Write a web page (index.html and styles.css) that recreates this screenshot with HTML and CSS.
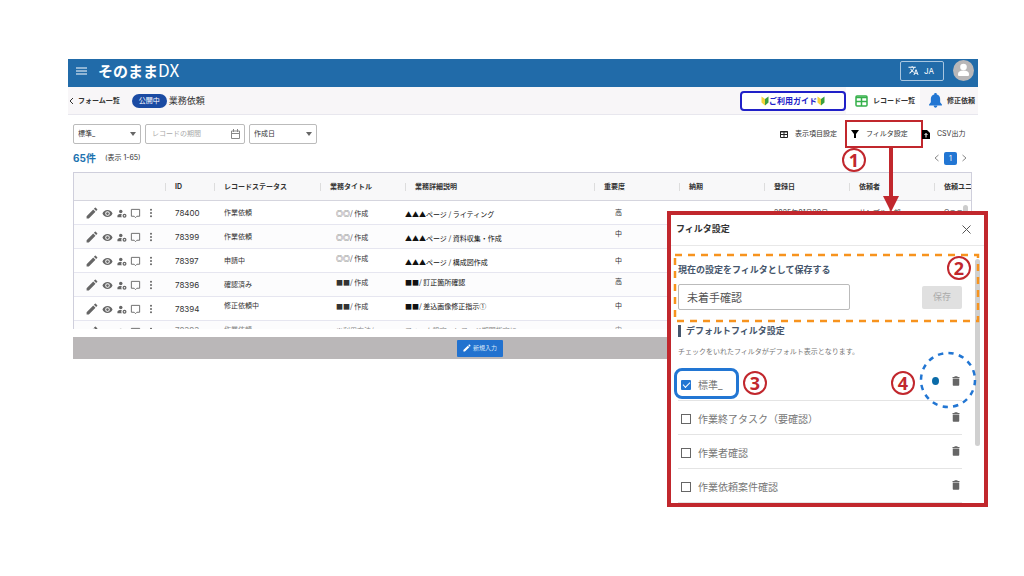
FILE: index.html
```html
<!DOCTYPE html>
<html lang="ja">
<head>
<meta charset="utf-8">
<title>そのままDX</title>
<link rel="stylesheet" href="styles.css">
</head>
<body>
<svg class="defs" aria-hidden="true">
  <symbol id="edit" viewBox="2 2 20 20"><path d="M3 17.250V21h3.750L17.810 9.940l-3.750-3.750L3 17.250zM20.710 7.040a1 1 0 000-1.410l-2.340-2.340a1 1 0 00-1.410 0l-1.830 1.830 3.750 3.750 1.830-1.830z"/></symbol>
  <symbol id="eye" viewBox="0 0 24 24"><path fill-rule="evenodd" d="M12 4.500C7 4.500 2.730 7.610 1 12c1.730 4.390 6 7.500 11 7.500s9.270-3.110 11-7.500c-1.730-4.390-6-7.500-11-7.500zM12 17a5 5 0 110-10 5 5 0 010 10zm0-8a3 3 0 100 6 3 3 0 000-6z"/></symbol>
  <symbol id="user-gear" viewBox="0 0 24 24"><circle cx="9" cy="7" r="4.200"/><path d="M1 21v-3c0-3 4-4.600 8-4.600 1.500 0 2 .1 2.500.3-1.500 2-1.500 5 0 7.300z"/><path fill-rule="evenodd" d="M18 12.500a4.800 4.800 0 110 9.600 4.800 4.800 0 010-9.600zm0 3a1.800 1.800 0 100 3.600 1.800 1.800 0 000-3.600z"/></symbol>
  <symbol id="comment" viewBox="0 0 24 24"><path d="M3 3h18v15h-6l-3 3-3-3H3z" fill="none" stroke="currentColor" stroke-width="2"/></symbol>
  <symbol id="more" viewBox="0 0 24 24"><circle cx="12" cy="4" r="2.400"/><circle cx="12" cy="12" r="2.400"/><circle cx="12" cy="20" r="2.400"/></symbol>
  <symbol id="trash" viewBox="4 2 16 20"><path d="M5.500 7h13v12.500c0 1.200-.8 2-2 2h-9c-1.200 0-2-.8-2-2zM5 4h3.500l1-1.500h5l1 1.500H19v2H5z"/></symbol>
  <symbol id="leaf" viewBox="0 0 16 20"><path d="M1 1l7 5v13l-7-6z" fill="#f2d43a"/><path d="M15 1L8 6v13l7-6z" fill="#3a9e3f"/></symbol>
  <symbol id="tools" viewBox="0 0 70 12">
    <use href="#edit" x="0" y="0" width="12" height="12"/>
    <use href="#eye" x="16" y="1" width="11" height="11"/>
    <use href="#user-gear" x="31" y="1" width="10" height="11"/>
    <use href="#comment" x="44" y="1" width="11" height="11"/>
    <use href="#more" x="60" y="1" width="10" height="10"/>
  </symbol>
</svg>

<div class="stage">
  <header class="topbar">
    <button class="plain menu" aria-label="メニュー"><svg width="11" height="8" viewBox="0 0 11 8"><path d="M0 1h11M0 4h11M0 7h11" stroke="#fff"/></svg></button>
    <h1 class="brand">そのまま<span>DX</span></h1>
    <button class="lang"><svg width="11" height="11" viewBox="0 0 24 24" fill="#fff"><path d="M12.870 15.070l-2.540-2.510.03-.03c1.740-1.940 2.980-4.170 3.710-6.530H17V4h-7V2H8v2H1v1.990h11.170C11.500 7.920 10.440 9.750 9 11.350 8.070 10.320 7.300 9.190 6.690 8h-2c.73 1.630 1.730 3.170 2.980 4.560l-5.090 5.020L4 19l5-5 3.110 3.110.76-2.040zM18.500 10h-2L12 22h2l1.120-3h4.750L21 22h2l-4.500-12zm-2.620 7l1.620-4.330L19.120 17h-3.240z"/></svg>JA</button>
    <button class="plain" aria-label="アカウント"><svg width="21" height="21" viewBox="0 0 21 21"><circle cx="10.500" cy="10.500" r="10.500" fill="#b9b7b8"/><circle cx="10.500" cy="7" r="3.300" fill="#fff"/><path d="M5 16v-2c0-2 2-3.500 5.500-3.500S16 12 16 14v1q0 1-1 1H6q-1 0-1-1z" fill="#fff"/></svg></button>
  </header>

  <nav class="subbar">
    <a class="back" href="#"><svg width="5" height="8" viewBox="0 0 5 8"><path d="M4 1L1 4l3 3" fill="none" stroke="#333"/></svg>フォーム一覧</a>
    <span class="badge">公開中</span>
    <h2 class="form-name">業務依頼</h2>
    <button class="guide"><svg width="8" height="10"><use href="#leaf"/></svg>ご利用ガイド<svg width="8" height="10"><use href="#leaf"/></svg></button>
    <a class="tab active" href="#"><svg width="13" height="12" viewBox="0 0 13 12"><rect x="1" y="1" width="11" height="10" rx="1" fill="none" stroke="#34b04a" stroke-width="1.500"/><path d="M1 2.500h11M1 6.500h11M6.500 3v8" stroke="#34b04a" stroke-width="1.500"/></svg>レコード一覧</a>
    <a class="tab" href="#"><svg width="13" height="15" viewBox="3 2 18 21" fill="#2276d3"><path d="M12 22.500c1.500 0 2.500-.9 2.500-2.500h-5c0 1.600 1 2.500 2.500 2.500zM18.500 15v-5c0-3-1.900-5.200-4.700-5.900V3.500c0-1-.8-1.500-1.800-1.500s-1.800.5-1.800 1.500v.6C7.400 4.800 5.500 7 5.500 10v5L3 18v1.500h18V18z"/></svg>修正依頼</a>
  </nav>

  <main class="content">
    <div class="filters">
      <label class="pick"><select aria-label="フィルタ"><option>標準_</option></select><svg width="6" height="4"><path d="M0 0h6L3 4z"/></svg></label>
      <label class="pick date"><input type="text" placeholder="レコードの期間" aria-label="レコードの期間"><svg width="9" height="10" viewBox="0 0 9 10"><path d="M.5 2h8v7.500h-8zM.5 4.500h8M2.500 0v3M6.500 0v3" fill="none" stroke="#888"/></svg></label>
      <label class="pick"><select aria-label="日付の種類"><option>作成日</option></select><svg width="6" height="4"><path d="M0 0h6L3 4z"/></svg></label>
      <div class="actions">
        <button class="plain action"><svg width="8" height="7" viewBox="0 0 8 7"><path d="M.5.5h7v6h-7zM0 1h8M.5 3.500h7M4 1v5" fill="none" stroke="#222"/></svg>表示項目設定</button>
        <button class="plain action target"><svg width="8" height="8" viewBox="0 0 8 8"><path d="M0 0h8L5 4v4H3V4z"/></svg>フィルタ設定
          <svg class="mark-arrow" width="16" height="65" viewBox="0 0 16 65"><path d="M6 0h4v49h6L8 65 0 49h6z" fill="#c1272d"/></svg>
          <span class="num num-1">1</span>
        </button>
        <button class="plain action csv"><svg width="8" height="9" viewBox="0 0 8 9"><path d="M0 0h5l3 3v6H0z"/><path d="M4 7.500v-4M2.500 5L4 3.500 5.500 5" fill="none" stroke="#fff"/></svg>CSV出力</button>
      </div>
    </div>

    <div class="summary">
      <strong>65件</strong><span>(表示 1-65)</span>
      <div class="pager">
        <button class="plain" aria-label="前へ"><svg width="5" height="8" viewBox="0 0 5 8"><path d="M4.500 1L1 4l3.500 3" fill="none" stroke="#888"/></svg></button>
        <button class="page">1</button>
        <button class="plain" aria-label="次へ"><svg width="5" height="8" viewBox="0 0 5 8"><path d="M.5 1L4 4 .5 7" fill="none" stroke="#888"/></svg></button>
      </div>
    </div>

    <div class="grid">
      <table>
        <colgroup><col class="c-tools"><col class="c-id"><col class="c-status"><col class="c-mid"><col class="c-desc"><col class="c-mid"><col class="c-mid"><col class="c-mid"><col class="c-mid"><col></colgroup>
        <thead><tr><th></th><th>ID</th><th>レコードステータス</th><th>業務タイトル</th><th>業務詳細説明</th><th>重要度</th><th>納期</th><th>登録日</th><th>依頼者</th><th>依頼ユニ</th></tr></thead>
        <tbody>
          <tr><td><svg class="tools"><use href="#tools"/></svg></td><td>78400</td><td>作業依頼</td><td>◎◎/ 作成</td><td class="low">▲▲▲ページ / ライティング</td><td>高</td><td>-</td><td>2025年01月20日</td><td>サンプル太郎</td><td>Qユニ</td></tr>
          <tr><td><svg class="tools"><use href="#tools"/></svg></td><td>78399</td><td>作業依頼</td><td>◎◎/ 作成</td><td class="low">▲▲▲ページ / 資料収集・作成</td><td class="high">中</td><td></td><td></td><td></td><td></td></tr>
          <tr><td><svg class="tools"><use href="#tools"/></svg></td><td>78397</td><td>申請中</td><td class="high">◎◎/ 作成</td><td class="low">▲▲▲ページ / 構成図作成</td><td>中</td><td></td><td></td><td></td><td></td></tr>
          <tr><td><svg class="tools"><use href="#tools"/></svg></td><td>78396</td><td>確認済み</td><td class="high">■■/ 作成</td><td class="high">■■/ 訂正箇所確認</td><td class="high">高</td><td></td><td></td><td></td><td></td></tr>
          <tr><td><svg class="tools"><use href="#tools"/></svg></td><td>78394</td><td class="high">修正依頼中</td><td class="high">■■/ 作成</td><td class="high">■■/ 差込画像修正指示①</td><td class="high">中</td><td></td><td></td><td></td><td></td></tr>
          <tr class="cut"><td><svg class="tools"><use href="#tools"/></svg></td><td>78393</td><td>作業依頼</td><td>※利用方法/</td><td>フォーム設定・レコード期間指定に</td><td>中</td><td></td><td></td><td></td><td></td></tr>
        </tbody>
      </table>
      <span class="grid-scroll"></span>
    </div>

    <div class="footer-bar"><button class="new"><svg width="8" height="8" fill="#fff"><use href="#edit"/></svg>新規入力</button></div>
  </main>

  <section class="panel" role="dialog" aria-labelledby="panel-title">
    <header class="panel-head">
      <h2 id="panel-title">フィルタ設定</h2>
      <button class="plain" aria-label="閉じる"><svg width="9" height="9" viewBox="0 0 9 9"><path d="M.5.5l8 8M8.500.5l-8 8" stroke="#555"/></svg></button>
    </header>
    <span class="panel-scroll"></span>
    <form class="save">
      <svg class="dash-box"><rect x="1" y="1" width="100%" height="100%" fill="none" stroke="#f7931e" stroke-width="2.500" stroke-dasharray="7 6"/></svg>
      <label for="filter-name">現在の設定をフィルタとして保存する</label>
      <div class="save-row"><input id="filter-name" type="text" value="未着手確認"><button type="button" disabled>保存</button></div>
      <span class="num num-2">2</span>
    </form>
    <div class="defaults">
      <h3>デフォルトフィルタ設定</h3>
      <p>チェックをいれたフィルタがデフォルト表示となります。</p>
      <ul>
        <li class="current"><label><input type="checkbox" checked>標準_</label><span class="row-end"><i class="dot"></i><button type="button" class="plain" aria-label="削除"><svg width="8" height="10"><use href="#trash"/></svg></button></span>
          <span class="ring-box"></span><span class="num num-3">3</span><span class="num num-4">4</span>
          <svg class="ring" width="58" height="58" viewBox="0 0 58 58"><circle cx="29" cy="29" r="27" fill="none" stroke="#2276d3" stroke-width="2.500" stroke-dasharray="5.300 5.300"/></svg></li>
        <li><label><input type="checkbox">作業終了タスク（要確認）</label><span class="row-end"><button type="button" class="plain" aria-label="削除"><svg width="8" height="10"><use href="#trash"/></svg></button></span></li>
        <li><label><input type="checkbox">作業者確認</label><span class="row-end"><button type="button" class="plain" aria-label="削除"><svg width="8" height="10"><use href="#trash"/></svg></button></span></li>
        <li><label><input type="checkbox">作業依頼案件確認</label><span class="row-end"><button type="button" class="plain" aria-label="削除"><svg width="8" height="10"><use href="#trash"/></svg></button></span></li>
      </ul>
    </div>
  </section>
</div>
</body>
</html>
```
FILE: styles.css
```css
* { box-sizing: border-box; }
body { margin: 0; min-height: 100vh; padding: 59px 46px 0 68px; background: #fff; color: #333; font: 7px/14px Inter, "Noto Sans CJK JP", sans-serif; }
h1, h2, h3, p, ul { margin: 0; padding: 0; font-weight: 400; list-style: none; }
button, input, select { font: inherit; color: inherit; margin: 0; }
a { color: inherit; text-decoration: none; }
svg { display: block; flex: none; }
button { cursor: pointer; }
.plain { border: 0; background: none; padding: 0; }
.defs { position: absolute; width: 0; height: 0; }

.stage { position: relative; }

.topbar { display: flex; align-items: center; height: 28px; padding: 0 4px 5px 8px; background: #216ba9; color: #fff; }
.brand { margin-left: 11px; margin-right: auto; font: 700 15px/22px "Noto Sans CJK JP", sans-serif; }
.brand span { font-size: 17px; font-weight: 400; }
.lang { display: flex; align-items: center; gap: 5px; height: 20px; width: 44px; margin-right: 9px; padding: 0 7px; border: 1px solid #a9c6e0; border-radius: 2px; background: none; font-size: 8px; }

.subbar { display: flex; align-items: center; height: 28px; border-bottom: 1px solid #e8e7ee; background: #f8f6f8; }
.back { display: flex; align-items: center; gap: 4px; padding-left: 1px; font-weight: 700; }
.badge { margin-left: 12px; padding: 0 7px; border-radius: 7px; background: #1b4ba3; color: #fff; }
.form-name { margin-left: 2px; margin-right: auto; font-size: 9px; }
.guide { display: flex; align-items: center; justify-content: center; width: 106px; height: 20px; padding: 0; border: 2px solid #2020c8; border-radius: 4px; background: #fff; color: #2020c8; font-size: 8px; font-weight: 700; }
.tab { display: flex; align-items: center; gap: 5px; height: 27px; padding: 0 3px 0 9px; font-weight: 700; }
.tab.active { padding-right: 5px; background: #fff; }

.content { padding: 9px 6px 0 5px; }
.filters { display: flex; align-items: center; gap: 4px; height: 20px; }
.pick { position: relative; display: flex; align-items: center; width: 68px; height: 20px; border: 1px solid #bbb; border-radius: 2px; padding: 0 4px; fill: #666; }
.pick select, .pick input { flex: 1; min-width: 0; padding: 0; border: 0; outline: 0; background: none; appearance: none; }
.pick.date { width: 100px; padding: 0 4px 0 6px; }
.pick input::placeholder { color: #aaa; opacity: 1; }
.actions { display: flex; margin-left: auto; gap: 13px; padding-right: 4px; }
.action { position: relative; display: flex; align-items: center; gap: 7px; width: 58px; white-space: nowrap; }
.action.csv { width: 46px; }
.action.target::before { content: ""; position: absolute; inset: -7px -14px -7px -6px; border: 2px solid #c1272d; }
.mark-arrow { position: absolute; top: 20px; left: 32px; z-index: 4; }

.summary { display: flex; align-items: center; height: 28px; gap: 9px; }
.summary strong { color: #1e73b0; font-size: 10px; }
.pager { display: flex; align-items: center; gap: 5px; margin-left: auto; padding-right: 5px; }
.page { width: 13px; height: 13px; padding: 0; border: 0; border-radius: 2px; background: #2276d3; color: #fff; line-height: 13px; }

.grid { position: relative; max-height: 157px; overflow: hidden; border: solid #cfcfdc; border-width: 1px 1px 0 1px; }
.grid table { width: 100%; border-collapse: separate; border-spacing: 0; table-layout: fixed; }
.c-tools { width: 91px; }
.c-id { width: 49px; }
.c-status { width: 106px; }
.c-mid { width: 85px; }
.c-desc { width: 189px; }
.grid th { position: relative; height: 28px; padding: 0 0 0 10px; border-bottom: 1px solid #d5d5de; background: #f8f8f9; text-align: left; font-weight: 700; white-space: nowrap; overflow: hidden; }
.grid th + th::before { content: ""; position: absolute; left: 0; top: 10px; height: 8px; border-left: 1px solid #ddd; }
.grid td { height: 24px; padding: 0 0 0 10px; border-bottom: 1px solid #e6e6f0; line-height: 20px; white-space: nowrap; vertical-align: middle; overflow: hidden; }
.grid tr:nth-child(even) td { background: #fcfcfd; }
.grid td:first-child { padding-left: 12px; }
.grid td:nth-child(2) { font-size: 8px; }
.grid td:nth-child(4), .grid td:nth-child(5) { font-family: "Noto Sans CJK JP", sans-serif; }
.grid td:nth-child(4) { padding-left: 16px; }
.grid td:nth-child(5) { padding-left: 0; color: #111; }
.grid td:nth-child(6) { padding-left: 21px; }
.grid td.low { vertical-align: bottom; }
.grid td.high { vertical-align: top; line-height: 18px; }
.grid .cut td { color: #888; line-height: 18px; vertical-align: top; }
.grid .cut .tools { margin-top: 5px; }
.tools { width: 70px; height: 12px; color: #666; fill: #666; }
.grid-scroll { position: absolute; right: 3px; top: 32px; width: 5px; height: 60px; border-radius: 3px; background: #ccc; }

.footer-bar { display: flex; justify-content: center; align-items: center; height: 22px; margin-top: 8px; margin-right: -6px; padding-right: 91px; background: #bab7b8; }
.new { display: flex; align-items: center; justify-content: center; gap: 2px; width: 46px; height: 17px; padding: 0; border: 0; border-radius: 1px; background: #2272cf; color: #d8e7f8; font-size: 6px; }

.panel { position: absolute; top: 152px; right: -10px; width: 321px; border: 4px solid #c1272d; background: #fff; }
.panel-head { display: flex; align-items: center; justify-content: space-between; height: 31px; padding: 0 13px 2px 5px; border-bottom: 1px solid #e8e8e8; }
.panel-head h2 { font-size: 9px; font-weight: 700; }
.panel-scroll { position: absolute; right: 4px; top: 44px; width: 5px; height: 187px; border-radius: 3px; background: #d0d0d0; }
.save { position: relative; margin: 8px 5px 0 3px; padding: 9px 17px 12px 4px; }
.dash-box { position: absolute; inset: 0; width: calc(100% - 2px); height: calc(100% - 2px); overflow: visible; pointer-events: none; }
.save label { display: block; color: #46566c; font-size: 9px; font-weight: 700; }
.save-row { display: flex; align-items: center; justify-content: space-between; margin-top: 7px; }
.save-row input { width: 172px; height: 26px; padding: 0 8px; border: 1px solid #bbb; border-radius: 2px; color: #555; font-size: 11px; }
.save-row button { width: 40px; height: 23px; padding: 0; border: 0; border-radius: 2px; background: #e0e0e0; color: #aaa; font-size: 9px; }
.defaults { margin-top: 3px; padding: 0 22px 0 7px; }
.defaults h3 { padding-left: 5px; border-left: 3px solid #46566c; color: #46566c; font-size: 9px; font-weight: 700; line-height: 12px; }
.defaults p { margin-top: 8px; color: #777; }
.defaults ul { margin-top: 8px; }
.defaults li { position: relative; display: flex; align-items: center; justify-content: space-between; height: 34px; padding: 3px 2px 0 3px; border-bottom: 1px solid #e4e4e4; }
.defaults label { display: flex; align-items: center; gap: 7px; color: #777; font-size: 10px; }
.defaults input { appearance: none; width: 10px; height: 10px; border: 1px solid #666; }
.defaults input:checked { border: 0; border-radius: 1px; background: #2276d3; display: grid; place-items: center; }
.defaults input:checked::after { content: ""; width: 6px; height: 3px; margin-bottom: 2px; border: solid #fff; border-width: 0 0 1px 1px; transform: rotate(-45deg); }
.row-end { display: flex; align-items: center; gap: 13px; padding-bottom: 4px; }
.current .row-end { padding-bottom: 9px; }
.row-end svg { fill: #666; }
.dot { width: 7px; height: 8px; border-radius: 50%; background: #0a6ba8; }

.ring-box { position: absolute; left: -4px; top: 1px; width: 65px; height: 31px; border: 3px solid #2276d3; border-radius: 8px; pointer-events: none; }
.ring { position: absolute; right: -15px; top: -16px; pointer-events: none; }
.num { position: absolute; width: 24px; height: 24px; border: 2px solid #c1272d; border-radius: 50%; background: #fff; color: #c1272d; font: 700 18px/20px "Noto Sans", sans-serif; text-align: center; }
.num-1 { top: 21px; left: -9px; }
.num-2 { top: 2px; right: 8px; }
.num-3 { top: 4px; left: 65px; }
.num-4 { top: 4px; right: 47px; }
```
